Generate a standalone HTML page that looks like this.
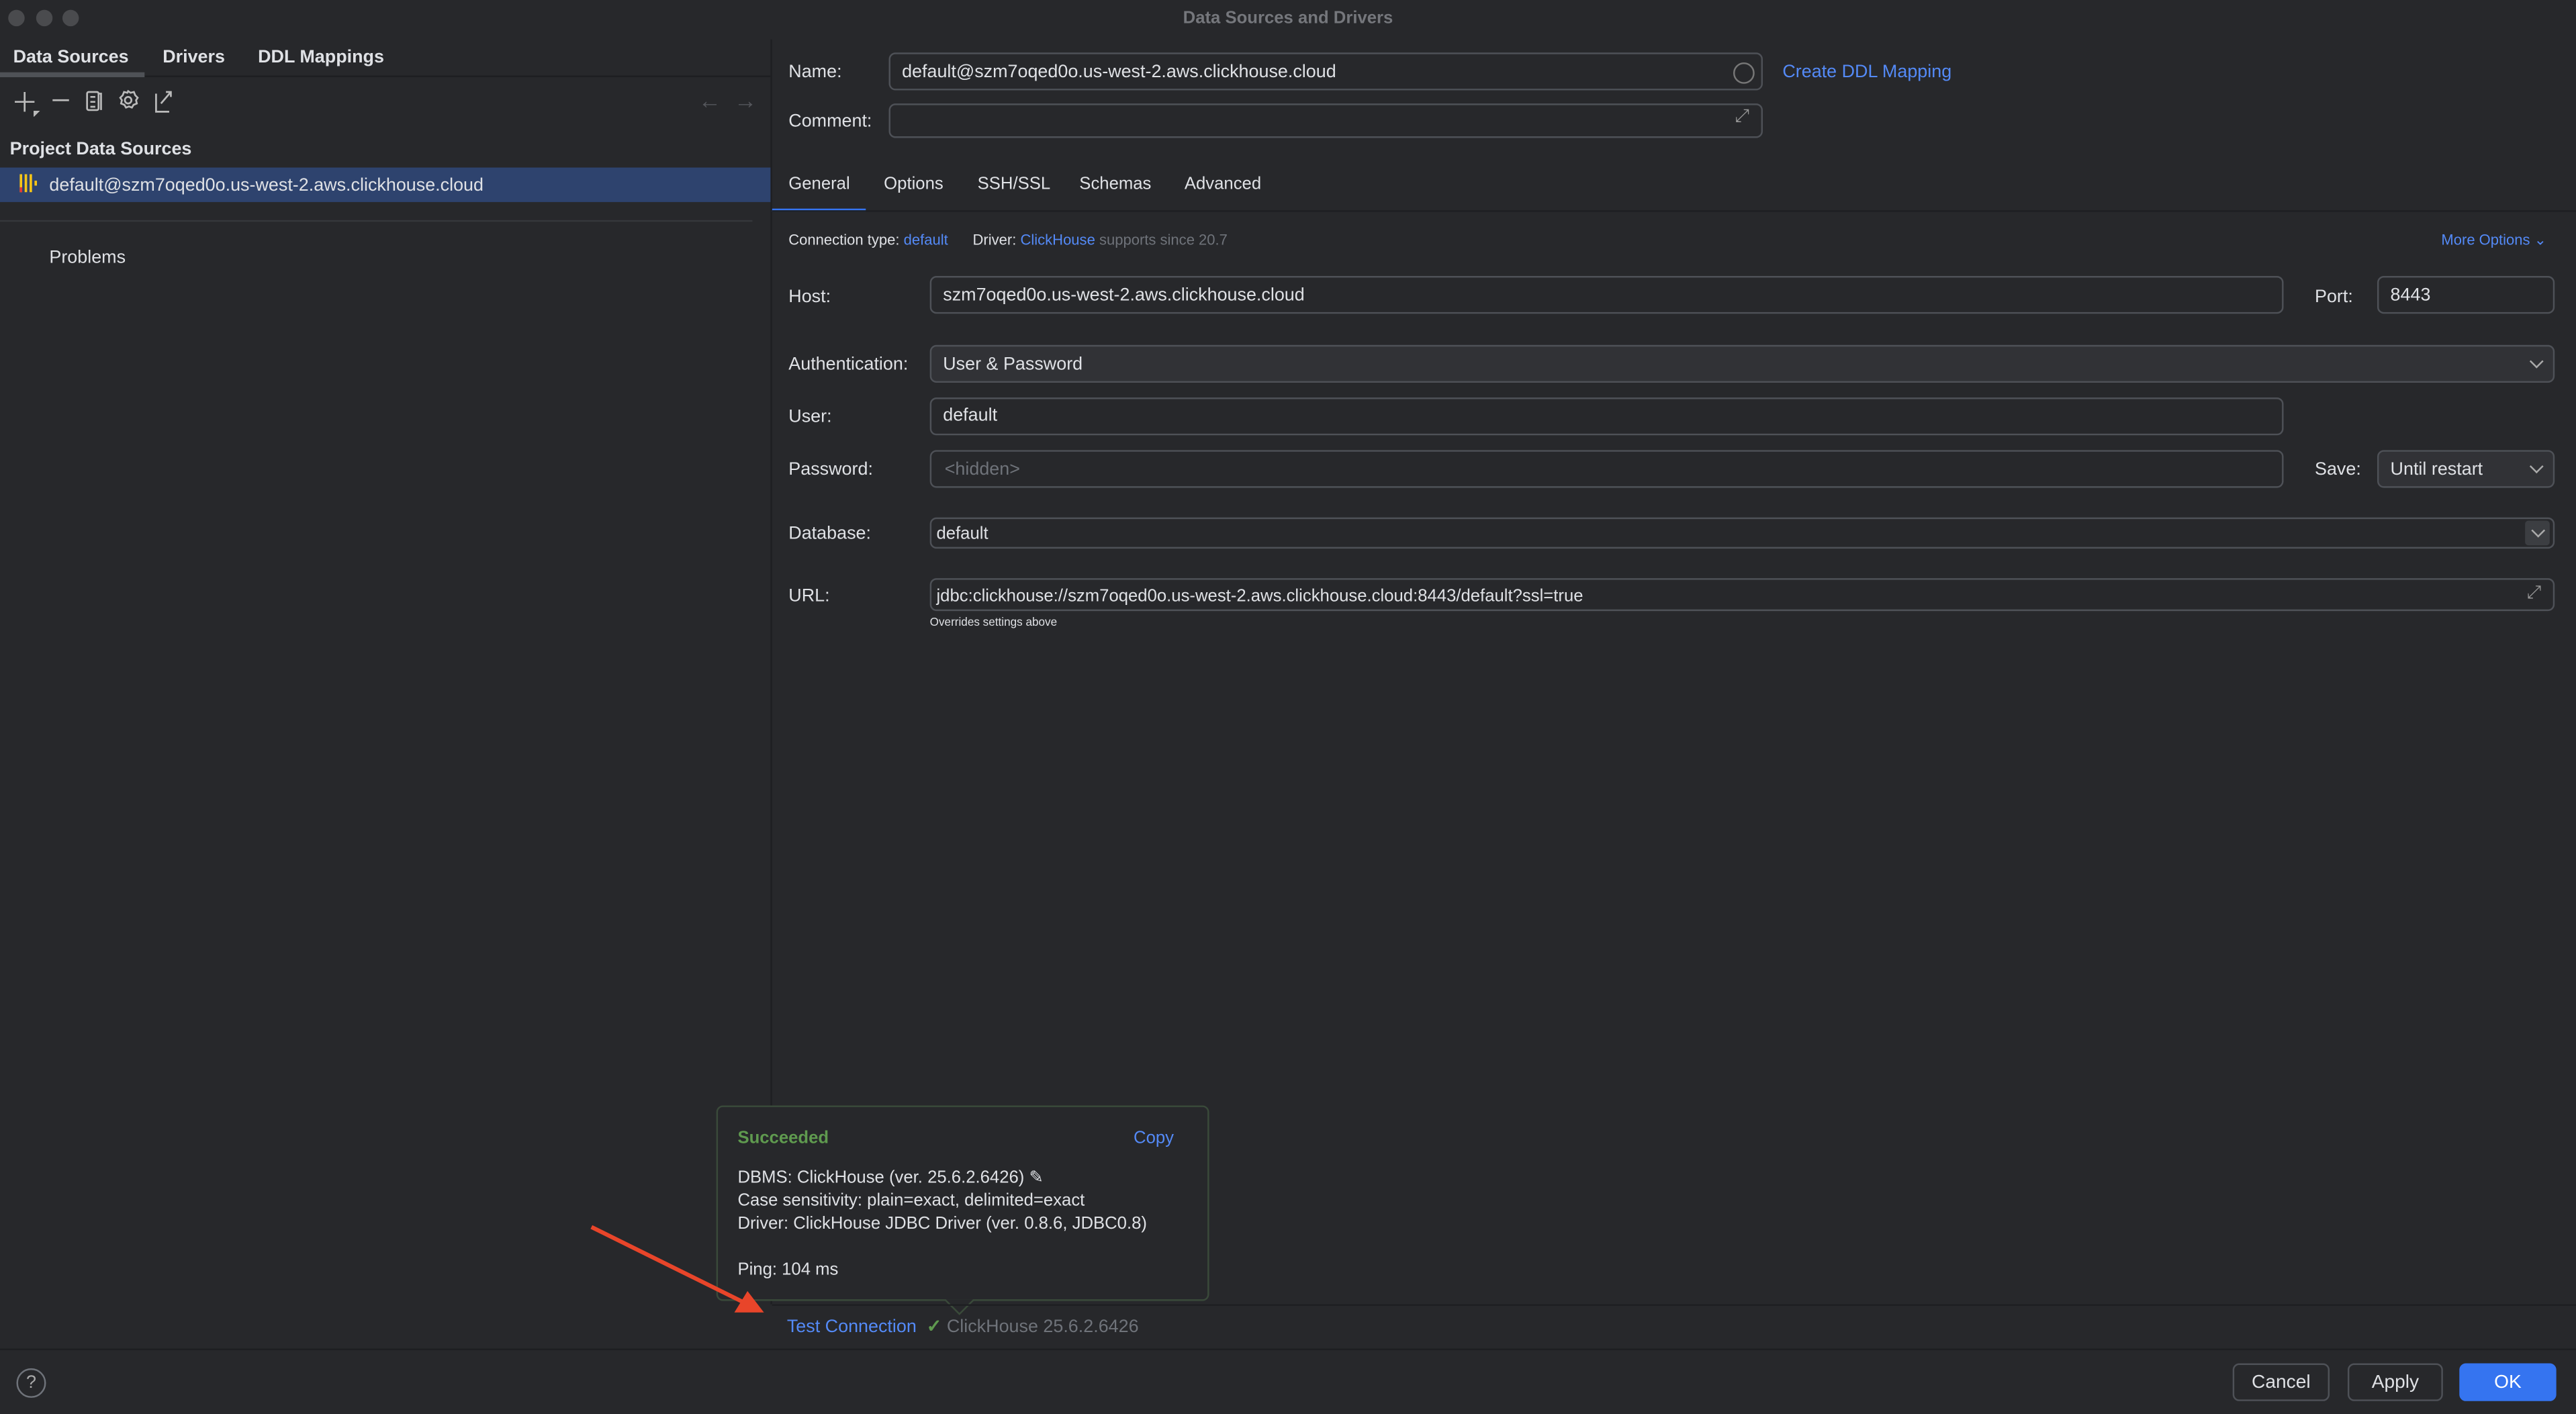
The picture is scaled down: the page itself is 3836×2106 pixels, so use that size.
<!DOCTYPE html>
<html><head><meta charset="utf-8"><style>
html,body{margin:0;padding:0;background:#27282b;overflow:hidden;width:3836px;height:2106px}
#w{position:absolute;left:0;top:0;width:1568px;height:861px;transform:scale(2.44643);transform-origin:0 0;background:#27282b;font-family:"Liberation Sans",sans-serif;color:#dfe1e5;font-size:11px}
.a{position:absolute;white-space:nowrap}
.t{margin-top:1px}
.f{position:absolute;border:1px solid #4e5157;border-radius:4px;box-sizing:border-box;background:#27282b}
.dd{background:#313236}
.lbl{font-size:11px;margin-top:1px}
.blue{color:#548af7}
.gray{color:#6f737a}
.tab{position:absolute;top:106px;font-size:10.5px}
.btn{position:absolute;top:830px;height:23px;border:1px solid #4e5157;border-radius:4px;box-sizing:border-box;text-align:center;line-height:22px;font-size:11.5px}
.chev{position:absolute;width:5px;height:5px;border-right:1.2px solid #aaa;border-bottom:1.2px solid #aaa;transform:rotate(45deg)}
</style></head><body><div id="w">
<div class="a" style="left:5px;top:6px;width:10px;height:10px;border-radius:50%;background:#4a4b4e"></div>
<div class="a" style="left:22px;top:6px;width:10px;height:10px;border-radius:50%;background:#4a4b4e"></div>
<div class="a" style="left:38px;top:6px;width:10px;height:10px;border-radius:50%;background:#4a4b4e"></div>
<div class="a" style="left:0;top:5px;width:1568px;text-align:center;color:#75777c;font-size:10.5px;font-weight:bold">Data Sources and Drivers</div>
<div class="a" style="left:469px;top:24px;width:1px;height:770px;background:#1e1f22"></div>
<div class="a" style="left:8px;top:29px;font-weight:bold;font-size:11px">Data Sources</div>
<div class="a" style="left:99px;top:29px;font-weight:bold;font-size:11px">Drivers</div>
<div class="a" style="left:157px;top:29px;font-weight:bold;font-size:11px">DDL Mappings</div>
<div class="a" style="left:0;top:46px;width:469px;height:1px;background:#1e1f22"></div>
<div class="a" style="left:0;top:44px;width:88px;height:3px;background:#4f5257"></div>
<svg class="a" style="left:8px;top:53px" width="110" height="18" viewBox="0 0 110 18" fill="none" stroke="#bbb" stroke-width="1.1">
<path d="M7 3v12M1 9h12"/><path d="M13 15l2 0-2 2z" fill="#bbb"/>
<path d="M24 8h10"/>
<rect x="45" y="3" width="7" height="11" rx="1"/><path d="M47 6h3M47 9h3M47 12h3M52 4h1.5v10"/>
<circle cx="70" cy="8" r="2"/><path d="M70 2.5l1.5 1 2-.5.8 2 1.5 1.5-1 1.5.5 2-2 .8-1 1.7-1.8-.7-1.8.7-1-1.7-2-.8.5-2-1-1.5 1.5-1.5.8-2 2 .5z"/>
<path d="M87 4v11h8M90 10l6-7M93 3h3v3"/>
</svg>
<div class="a" style="left:425px;top:53px;color:#55575c;font-size:14px">←&nbsp;&nbsp;→</div>
<div class="a" style="left:6px;top:85px;font-weight:bold;font-size:11px">Project Data Sources</div>
<div class="a" style="left:0;top:102px;width:469px;height:21px;background:#2e436e"></div>
<svg class="a" style="left:11px;top:106px" width="14" height="12"><rect x="1" y="0" width="1.5" height="11" fill="#f5c518"/><rect x="4" y="0" width="1.5" height="11" fill="#f5c518"/><rect x="7" y="0" width="1.5" height="11" fill="#f5c518"/><rect x="10" y="4" width="1.5" height="3" fill="#f5c518"/><rect x="1" y="8" width="1.5" height="3" fill="#e53935"/></svg>
<div class="a" style="left:30px;top:107px;font-size:11px">default@szm7oqed0o.us-west-2.aws.clickhouse.cloud</div>
<div class="a" style="left:0;top:134px;width:458px;height:1px;background:#35373b"></div>
<div class="a" style="left:30px;top:151px">Problems</div>
<div class="a lbl" style="left:480px;top:37px">Name:</div>
<div class="f" style="left:541px;top:32px;width:532px;height:23px"></div>
<div class="a t" style="left:549px;top:37px">default@szm7oqed0o.us-west-2.aws.clickhouse.cloud</div>
<div class="a" style="left:1055px;top:38px;width:11px;height:11px;border:1px solid #777;border-radius:50%"></div>
<div class="a blue t" style="left:1085px;top:37px">Create DDL Mapping</div>
<div class="a lbl" style="left:480px;top:67px">Comment:</div>
<div class="f" style="left:541px;top:63px;width:532px;height:21px"></div>
<div class="a" style="left:1056px;top:65px;color:#999;font-size:11px">⤢</div>
<div class="tab" style="left:480px">General</div>
<div class="tab" style="left:538px">Options</div>
<div class="tab" style="left:595px">SSH/SSL</div>
<div class="tab" style="left:657px">Schemas</div>
<div class="tab" style="left:721px">Advanced</div>
<div class="a" style="left:470px;top:127px;width:57px;height:2px;background:#3574f0"></div>
<div class="a" style="left:470px;top:128px;width:1098px;height:1px;background:#1e1f22"></div>
<div class="a" style="left:480px;top:141px;font-size:9px">Connection type: <span class="blue">default</span>&nbsp;&nbsp;&nbsp;&nbsp;&nbsp;&nbsp;Driver: <span class="blue">ClickHouse</span> <span class="gray">supports since 20.7</span></div>
<div class="a blue" style="left:1486px;top:141px;font-size:9px">More Options ⌄</div>
<div class="a lbl" style="left:480px;top:174px">Host:</div>
<div class="f" style="left:566px;top:168px;width:824px;height:23px"></div>
<div class="a t" style="left:574px;top:173px">szm7oqed0o.us-west-2.aws.clickhouse.cloud</div>
<div class="a lbl" style="left:1409px;top:174px">Port:</div>
<div class="f" style="left:1447px;top:168px;width:108px;height:23px"></div>
<div class="a t" style="left:1455px;top:173px">8443</div>
<div class="a lbl" style="left:480px;top:215px">Authentication:</div>
<div class="f dd" style="left:566px;top:210px;width:989px;height:23px"></div>
<div class="a t" style="left:574px;top:215px">User &amp; Password</div>
<div class="chev" style="left:1541px;top:217px"></div>
<div class="a lbl" style="left:480px;top:247px">User:</div>
<div class="f" style="left:566px;top:242px;width:824px;height:23px"></div>
<div class="a t" style="left:574px;top:246px">default</div>
<div class="a lbl" style="left:480px;top:279px">Password:</div>
<div class="f" style="left:566px;top:274px;width:824px;height:23px"></div>
<div class="a gray t" style="left:575px;top:279px">&lt;hidden&gt;</div>
<div class="a lbl" style="left:1409px;top:279px">Save:</div>
<div class="f dd" style="left:1447px;top:274px;width:108px;height:23px"></div>
<div class="a t" style="left:1455px;top:279px">Until restart</div>
<div class="chev" style="left:1541px;top:281px"></div>
<div class="a lbl" style="left:480px;top:318px">Database:</div>
<div class="f" style="left:566px;top:315px;width:989px;height:19px"></div>
<div class="a t" style="left:570px;top:318px;font-size:10.5px">default</div>
<div class="a" style="left:1537px;top:317px;width:15px;height:15px;background:#3c3e42;border-radius:2px"></div>
<div class="chev" style="left:1542px;top:320px"></div>
<div class="a lbl" style="left:480px;top:356px">URL:</div>
<div class="f" style="left:566px;top:352px;width:989px;height:20px"></div>
<div class="a t" style="left:570px;top:356px;font-size:10.5px">jdbc:clickhouse://szm7oqed0o.us-west-2.aws.clickhouse.cloud:8443/default?ssl=true</div>
<div class="a" style="left:1538px;top:355px;color:#999;font-size:11px">⤢</div>
<div class="a" style="left:566px;top:376px;font-size:7px">Overrides settings above</div>
<div class="a" style="left:436px;top:673px;width:300px;height:119px;background:#27282b;border:1px solid #3a4a3a;border-radius:4px;box-sizing:border-box"></div>
<div class="a" style="left:449px;top:687px;color:#5f9a4f;font-weight:bold;font-size:10.5px">Succeeded</div>
<div class="a blue" style="left:690px;top:687px;font-size:10.5px">Copy</div>
<div class="a" style="left:449px;top:710px;font-size:10.5px;line-height:14px">DBMS: ClickHouse (ver. 25.6.2.6426) ✎<br>Case sensitivity: plain=exact, delimited=exact<br>Driver: ClickHouse JDBC Driver (ver. 0.8.6, JDBC0.8)<br><br>Ping: 104 ms</div>
<svg class="a" style="left:575px;top:791px" width="20" height="10"><path d="M0 0L9 9 18 0" fill="#27282b" stroke="#3a4a3a"/></svg>
<div class="a" style="left:470px;top:794px;width:1098px;height:1px;background:#1e1f22"></div>
<div class="a" style="left:0;top:821px;width:1568px;height:1px;background:#1e1f22"></div>
<div class="a blue" style="left:479px;top:801px;font-size:11px">Test Connection <span style="color:#5f9a4f;font-weight:bold">&nbsp;✓</span> <span class="gray">ClickHouse 25.6.2.6426</span></div>
<svg class="a" style="left:355px;top:742px" width="115" height="60"><path d="M5 5L100 52" stroke="#e8452a" stroke-width="2.5"/><path d="M110 57L92 57 100 44z" fill="#e8452a"/></svg>
<div class="a" style="left:10px;top:833px;width:16px;height:16px;border:1px solid #6f737a;border-radius:50%;text-align:center;line-height:16px;font-size:11px;color:#aaa">?</div>
<div class="btn" style="left:1359px;width:59px">Cancel</div>
<div class="btn" style="left:1429px;width:58px">Apply</div>
<div class="btn" style="left:1497px;width:59px;background:#3574f0;border-color:#3574f0;color:#fff">OK</div>
</div></body></html>
